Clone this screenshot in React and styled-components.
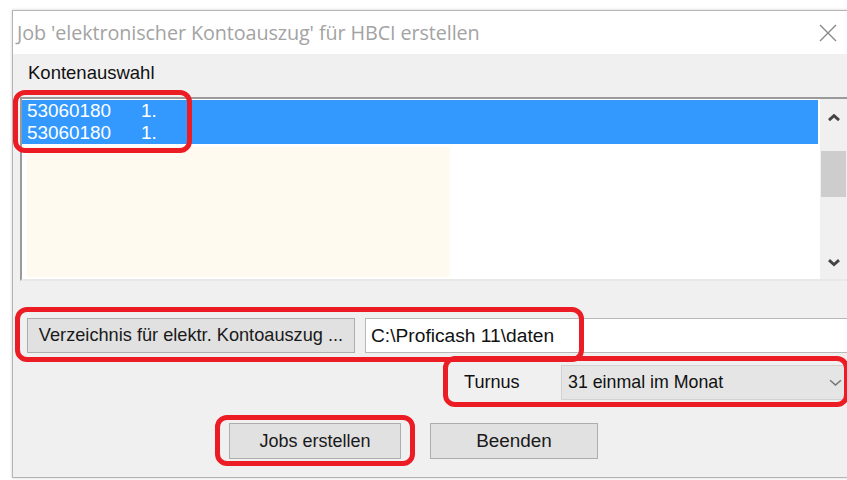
import React from "react"
import styled, { createGlobalStyle } from "styled-components"

const Global = createGlobalStyle`
  html, body {
    margin: 0;
    padding: 0;
    background: #fff;
    overflow: hidden;
  }
  body {
    font-family: "Liberation Sans", Arial, sans-serif;
  }
`

const Page = styled.div`
  position: relative;
  width: 847px;
  height: 480px;
  padding: 10px 0 0 12px;
  box-sizing: border-box;
`

const Window = styled.div`
  width: 847px;
  border: 1px solid #b4b4b4;
  box-shadow: 0 0 3px rgba(0, 0, 0, 0.18);
  background: #f0f0f0;
`

const TitleBar = styled.div`
  height: 43px;
  background: #fff;
  display: flex;
  align-items: center;
  justify-content: space-between;
  padding: 0 0 0 4px;
`

const Title = styled.span`
  font-family: "Open Sans", "Noto Sans", sans-serif;
  font-size: 19.8px;
  color: #a3a3a3;
  letter-spacing: -0.1px;
`

const CloseButton = styled.div`
  width: 20px;
  height: 20px;
  margin-right: 22px;
  display: flex;
  align-items: center;
  justify-content: center;
`

const Body = styled.div`
  padding: 8px 11px 18px 7px;
  font-size: 18.5px;
  color: #111;
`

const GroupLabel = styled.div`
  line-height: 22px;
  padding-left: 8px;
`

const ListBox = styled.div`
  margin-top: 13px;
  height: 184px;
  box-sizing: border-box;
  border: 2px solid;
  border-color: #9a9a9a #e8e8e8 #e8e8e8 #9a9a9a;
  background: #fff;
  display: flex;
`

const ListContent = styled.div`
  flex: 1;
  display: flex;
  flex-direction: column;
  padding: 1px 2px 2px 0;
`

const Row = styled.div`
  display: grid;
  grid-template-columns: 114px auto;
  height: 22px;
  line-height: 22px;
  padding-left: 5px;
  font-size: 18.9px;
  color: ${p => (p.$selected ? "#fff" : "#000")};
  background: ${p => (p.$selected ? "#3399ff" : "transparent")};
`

const EmptyArea = styled.div`
  flex: 1;
  padding: 3px 0 0 5px;
  display: flex;
`

const CreamColumn = styled.div`
  width: 423px;
  background: #fffaf0;
`

const ScrollBar = styled.div`
  width: 27px;
  background: #f0f0f0;
  display: flex;
  flex-direction: column;
  align-items: center;
`

const ScrollArrow = styled.div`
  height: 34px;
  width: 100%;
  box-sizing: border-box;
  padding-top: ${p => p.$shift || 0}px;
  display: flex;
  align-items: center;
  justify-content: center;
`

const Track = styled.div`
  flex: 1;
  width: 100%;
  padding-top: 18px;
  box-sizing: border-box;
`

const Thumb = styled.div`
  height: 46px;
  margin: 0 1px;
  background: #cdcdcd;
`

const DirRow = styled.div`
  margin-top: 37px;
  display: flex;
  gap: 10px;
  padding-left: 7px;
`

const Button = styled.div`
  box-sizing: border-box;
  height: ${p => p.$h || 35}px;
  width: ${p => p.$w}px;
  background: #e1e1e1;
  border: 1px solid #adadad;
  display: flex;
  align-items: center;
  justify-content: center;
  font-size: ${p => p.$fs || 18.2}px;
  color: #1a1a1a;
`

const TextField = styled.div`
  flex: 1;
  height: 35px;
  box-sizing: border-box;
  border: 1px solid #b8b8b8;
  background: #fff;
  display: flex;
  align-items: center;
  padding-left: 5px;
  font-size: 19.2px;
`

const TurnusRow = styled.div`
  margin-top: 12px;
  display: flex;
  align-items: center;
  padding-left: 443px;
  height: 35px;
`

const FieldLabel = styled.span`
  width: 97px;
  padding-left: 1px;
  font-size: 18.1px;
`

const Combo = styled.div`
  flex: 1;
  height: 35px;
  box-sizing: border-box;
  background: #e5e5e5;
  border: 1px solid #d2d2d2;
  display: flex;
  align-items: center;
  justify-content: space-between;
  padding: 0 6px 0 6px;
  font-size: 17.8px;
`

const ButtonRow = styled.div`
  margin-top: 23px;
  display: flex;
  gap: 29px;
  padding-left: 209px;
`

const Mark = styled.div`
  position: absolute;
  left: ${p => p.$x}px;
  top: ${p => p.$y}px;
  width: ${p => p.$w}px;
  height: ${p => p.$h}px;
  box-sizing: border-box;
  border: 5px solid #ec1c24;
  border-radius: 12px;
  pointer-events: none;
`

const Chevron = ({ up, color = "#444", width = 2.8, size = 12 }) => (
  <svg width={size} height={size * 0.6} viewBox="0 0 12 7">
    <path
      d={up ? "M1 6 L6 1.5 L11 6" : "M1 1 L6 5.5 L11 1"}
      fill="none"
      stroke={color}
      strokeWidth={width}
      strokeLinejoin="miter"
    />
  </svg>
)

const accounts = [
  { blz: "53060180", nr: "1." },
  { blz: "53060180", nr: "1." },
]

export default function App() {
  return (
    <>
      <Global />
      <Page>
        <Window>
          <TitleBar>
            <Title>Job 'elektronischer Kontoauszug' für HBCI erstellen</Title>
            <CloseButton>
              <svg width="18" height="18" viewBox="0 0 18 18">
                <path d="M1 1 L17 17 M17 1 L1 17" stroke="#8a8a8a" strokeWidth="1.4" />
              </svg>
            </CloseButton>
          </TitleBar>
          <Body>
            <GroupLabel>Kontenauswahl</GroupLabel>
            <ListBox>
              <ListContent>
                {accounts.map((a, i) => (
                  <Row key={i} $selected>
                    <span>{a.blz}</span>
                    <span>{a.nr}</span>
                  </Row>
                ))}
                <EmptyArea>
                  <CreamColumn />
                </EmptyArea>
              </ListContent>
              <ScrollBar>
                <ScrollArrow $shift={4}>
                  <Chevron up />
                </ScrollArrow>
                <Track>
                  <Thumb />
                </Track>
                <ScrollArrow $shift={2}>
                  <Chevron />
                </ScrollArrow>
              </ScrollBar>
            </ListBox>
            <DirRow>
              <Button $w={328}>Verzeichnis für elektr. Kontoauszug ...</Button>
              <TextField>C:\Proficash 11\daten</TextField>
            </DirRow>
            <TurnusRow>
              <FieldLabel>Turnus</FieldLabel>
              <Combo>
                <span>31 einmal im Monat</span>
                <Chevron color="#777" width={1.4} size={13} />
              </Combo>
            </TurnusRow>
            <ButtonRow>
              <Button $w={172} $h={36} $fs={18}>Jobs erstellen</Button>
              <Button $w={168} $h={36} $fs={18.9}>Beenden</Button>
            </ButtonRow>
          </Body>
        </Window>
        <Mark $x={13} $y={90} $w={179} $h={63} />
        <Mark $x={15} $y={307} $w={569} $h={55} />
        <Mark $x={443} $y={356} $w={406} $h={51} />
        <Mark $x={215} $y={415} $w={200} $h={51} />
      </Page>
    </>
  )
}
